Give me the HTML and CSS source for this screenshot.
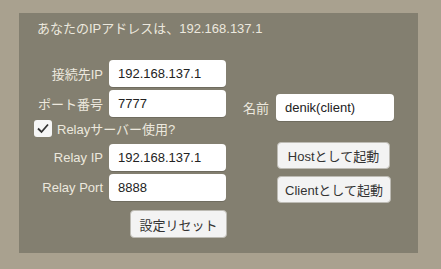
FILE: index.html
```html
<html>
<head>
  <meta charset="UTF-8">
  <link rel="stylesheet" href="styles.css">
</head>
<body>
  <div class="panel">
    <div class="title">あなたのIPアドレスは、192.168.137.1</div>
    <div class="content">
      <div class="left">
        <div class="field">
          <label class="label">接続先IP</label>
          <div class="input">192.168.137.1</div>
        </div>
        <div class="field">
          <label class="label">ポート番号</label>
          <div class="input">7777</div>
        </div>
        <div class="check-row">
          <span class="checkbox">
            <svg width="14" height="12" viewBox="0 0 14 12"><path d="M2 6.5 L5.5 10 L12 2.5" fill="none" stroke="#333" stroke-width="1.8"/></svg>
          </span>
          <span class="check-text">Relayサーバー使用?</span>
        </div>
        <div class="field relay">
          <label class="label">Relay IP</label>
          <div class="input">192.168.137.1</div>
        </div>
        <div class="field">
          <label class="label">Relay Port</label>
          <div class="input">8888</div>
        </div>
        <button class="btn reset">設定リセット</button>
      </div>
      <div class="right">
        <div class="name-row">
          <label class="label">名前</label>
          <div class="input name">denik(client)</div>
        </div>
        <button class="btn host">Hostとして起動</button>
        <button class="btn client">Clientとして起動</button>
      </div>
    </div>
  </div>
</body>
</html>
```

FILE: styles.css
```css
body {
  margin: 0;
  padding: 0;
  background-color: #a9a18f;
  font-family: "Liberation Sans", "Noto Sans CJK JP", sans-serif;
  font-size: 13px;
}

.panel {
  margin: 13px 0 0 19px;
  width: 399px;
  height: 240px;
  background-color: #837f70;
  box-sizing: border-box;
  padding-top: 8px;
}

.title {
  color: #ece8de;
  line-height: 16px;
  padding-left: 18px;
}

.content {
  display: flex;
  margin-top: 23px;
}

.left {
  width: 207px;
  display: flex;
  flex-direction: column;
}

.field {
  display: grid;
  grid-template-columns: 84px 117px;
  column-gap: 6px;
  align-items: center;
  margin-bottom: 3px;
}

.label {
  color: #ece8de;
  text-align: right;
}

.input {
  background-color: white;
  border-radius: 4px;
  height: 27px;
  line-height: 27px;
  padding-left: 9px;
  color: #222;
  box-shadow: 0 1px 0 rgba(0, 0, 0, 0.15);
}

.check-row {
  display: flex;
  align-items: center;
  margin: -1px 0 0 15px;
  height: 18px;
}

.checkbox {
  width: 18px;
  height: 17px;
  background-color: #f6f6f6;
  border-radius: 3px;
  display: flex;
  align-items: center;
  justify-content: center;
}

.check-text {
  color: #ece8de;
  margin-left: 5px;
}

.relay {
  margin-top: 7px;
}

.btn {
  font-family: "Liberation Sans", "Noto Sans CJK JP", sans-serif;
  font-size: 13px;
  color: #333;
  background-color: #f3f3f3;
  border: 1px solid #bdbbb4;
  border-radius: 4px;
  padding: 0;
}

.reset {
  margin: 6px 0 0 111px;
  width: 97px;
  height: 28px;
}

.right {
  margin-left: 17px;
  padding-top: 34px;
  display: flex;
  flex-direction: column;
}

.name-row {
  display: flex;
  align-items: center;
}

.name-row .label {
  margin-right: 7px;
}

.name {
  width: 109px;
}

.host {
  margin: 21px 0 0 34px;
  width: 113px;
  height: 27px;
}

.client {
  margin: 7px 0 0 34px;
  width: 114px;
  height: 27px;
}
```
